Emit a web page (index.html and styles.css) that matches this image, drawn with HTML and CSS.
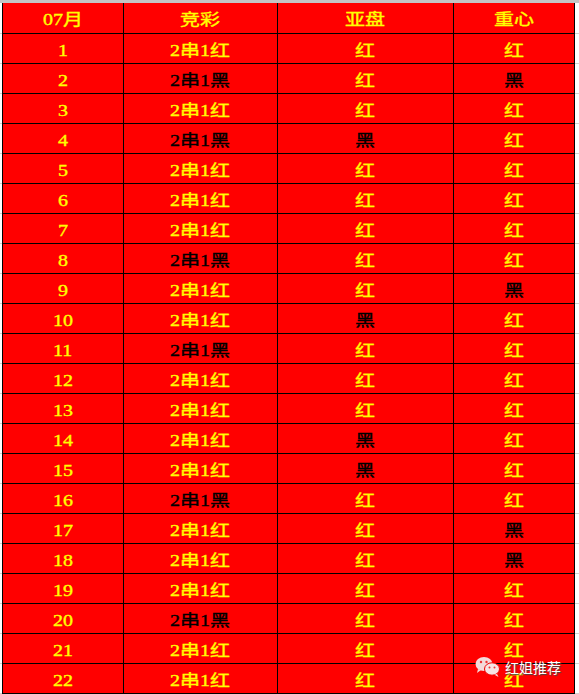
FILE: index.html
```html
<!DOCTYPE html>
<html lang="zh">
<head>
<meta charset="utf-8">
<link rel="stylesheet" href="styles.css">
</head>
<body>
<div class="sheet">
<table class="grid">
<colgroup><col class="c1"><col class="c2"><col class="c3"><col class="c4"></colgroup>
<thead>
<tr><th><span class="t">07月</span></th><th><span class="t">竞彩</span></th><th><span class="t">亚盘</span></th><th><span class="t">重心</span></th></tr>
</thead>
<tbody>
<tr><td><span class="t">1</span></td><td><span class="t">2串1红</span></td><td><span class="t">红</span></td><td><span class="t">红</span></td></tr>
<tr><td><span class="t">2</span></td><td class="b"><span class="t">2串1黑</span></td><td><span class="t">红</span></td><td class="b"><span class="t">黑</span></td></tr>
<tr><td><span class="t">3</span></td><td><span class="t">2串1红</span></td><td><span class="t">红</span></td><td><span class="t">红</span></td></tr>
<tr><td><span class="t">4</span></td><td class="b"><span class="t">2串1黑</span></td><td class="b"><span class="t">黑</span></td><td><span class="t">红</span></td></tr>
<tr><td><span class="t">5</span></td><td><span class="t">2串1红</span></td><td><span class="t">红</span></td><td><span class="t">红</span></td></tr>
<tr><td><span class="t">6</span></td><td><span class="t">2串1红</span></td><td><span class="t">红</span></td><td><span class="t">红</span></td></tr>
<tr><td><span class="t">7</span></td><td><span class="t">2串1红</span></td><td><span class="t">红</span></td><td><span class="t">红</span></td></tr>
<tr><td><span class="t">8</span></td><td class="b"><span class="t">2串1黑</span></td><td><span class="t">红</span></td><td><span class="t">红</span></td></tr>
<tr><td><span class="t">9</span></td><td><span class="t">2串1红</span></td><td><span class="t">红</span></td><td class="b"><span class="t">黑</span></td></tr>
<tr><td><span class="t">10</span></td><td><span class="t">2串1红</span></td><td class="b"><span class="t">黑</span></td><td><span class="t">红</span></td></tr>
<tr><td><span class="t">11</span></td><td class="b"><span class="t">2串1黑</span></td><td><span class="t">红</span></td><td><span class="t">红</span></td></tr>
<tr><td><span class="t">12</span></td><td><span class="t">2串1红</span></td><td><span class="t">红</span></td><td><span class="t">红</span></td></tr>
<tr><td><span class="t">13</span></td><td><span class="t">2串1红</span></td><td><span class="t">红</span></td><td><span class="t">红</span></td></tr>
<tr><td><span class="t">14</span></td><td><span class="t">2串1红</span></td><td class="b"><span class="t">黑</span></td><td><span class="t">红</span></td></tr>
<tr><td><span class="t">15</span></td><td><span class="t">2串1红</span></td><td class="b"><span class="t">黑</span></td><td><span class="t">红</span></td></tr>
<tr><td><span class="t">16</span></td><td class="b"><span class="t">2串1黑</span></td><td><span class="t">红</span></td><td><span class="t">红</span></td></tr>
<tr><td><span class="t">17</span></td><td><span class="t">2串1红</span></td><td><span class="t">红</span></td><td class="b"><span class="t">黑</span></td></tr>
<tr><td><span class="t">18</span></td><td><span class="t">2串1红</span></td><td><span class="t">红</span></td><td class="b"><span class="t">黑</span></td></tr>
<tr><td><span class="t">19</span></td><td><span class="t">2串1红</span></td><td><span class="t">红</span></td><td><span class="t">红</span></td></tr>
<tr><td><span class="t">20</span></td><td class="b"><span class="t">2串1黑</span></td><td><span class="t">红</span></td><td><span class="t">红</span></td></tr>
<tr><td><span class="t">21</span></td><td><span class="t">2串1红</span></td><td><span class="t">红</span></td><td><span class="t">红</span></td></tr>
<tr><td><span class="t">22</span></td><td><span class="t">2串1红</span></td><td><span class="t">红</span></td><td><span class="t">红</span></td></tr>
</tbody>
</table>
<div class="mark">
<svg class="wx" width="26" height="21" viewBox="0 0 26 21">
<ellipse cx="9" cy="8" rx="8.5" ry="7" fill="#f3dada"/>
<path d="M3 13 L2 17 L6 14 Z" fill="#f3dada"/>
<ellipse cx="17" cy="13" rx="7.5" ry="6.2" fill="#f7e4e4" stroke="#e00" stroke-width="1"/>
<path d="M22 18 L23.5 21 L19.5 18.8 Z" fill="#f7e4e4"/>
<circle cx="6" cy="6" r="1.2" fill="#e33"/>
<circle cx="11.5" cy="6" r="1.2" fill="#e33"/>
<circle cx="14.5" cy="11.5" r="1" fill="#e33"/>
<circle cx="19.5" cy="11.5" r="1" fill="#e33"/>
</svg>
<span class="mtext">红姐推荐</span>
</div>
</div>
</body>
</html>
```
FILE: styles.css
```css
html, body {
  margin: 0;
  padding: 0;
}
body {
  width: 579px;
  height: 694px;
  overflow: hidden;
  background-color: #ffffff;
  background-image: repeating-linear-gradient(to bottom, transparent 0, transparent 29px, #d2d2d2 29px, #d2d2d2 30px);
  background-position: 0 4px;
}
.sheet {
  position: relative;
  border-top: 3px solid #c4c4c4;
  padding-left: 2px;
  height: 691px;
}
.grid {
  border-collapse: collapse;
  table-layout: fixed;
  width: 573px;
  background: #ff0000;
  font-family: "Liberation Serif", "Noto Sans CJK SC", serif;
  font-weight: normal;
  font-size: 16px;
  color: #ffff00;
}
.c1 { width: 121px; }
.c2 { width: 154px; }
.c3 { width: 176px; }
.c4 { width: 121px; }
.grid th, .grid td {
  border: 1px solid #000;
  padding: 0;
  height: 29px;
  text-align: center;
  vertical-align: middle;
  font-weight: normal;
  line-height: 20px;
  -webkit-text-stroke: 0.35px currentColor;
}
.grid thead th {
  border-top: none;
  height: 30px;
}
.grid .b {
  color: #000;
}
.t {
  display: inline-block;
  transform: translateY(1.5px) scaleX(1.25);
}
.mark {
  position: absolute;
  left: 475px;
  top: 653px;
  display: flex;
  align-items: center;
  gap: 4px;
}
.mtext {
  font-family: "Noto Sans CJK SC", sans-serif;
  font-size: 14px;
  color: #ffffff;
  text-shadow: 1px 1px 1px #444;
  line-height: 18px;
}
```
